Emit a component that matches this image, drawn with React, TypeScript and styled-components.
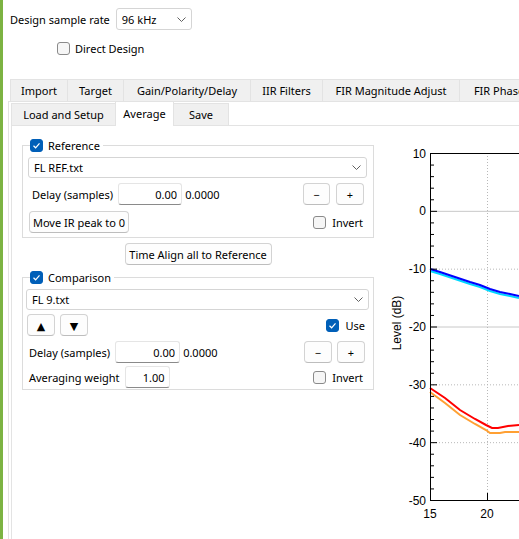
import React from 'react';
import styled, { createGlobalStyle } from 'styled-components';

const GlobalStyle = createGlobalStyle`
  html, body { margin: 0; padding: 0; background: #fff; }
  body {
    font-family: "Noto Sans", "Open Sans", sans-serif;
    font-size: 11px;
    color: #000;
  }
  * { box-sizing: border-box; }
`;

const Frame = styled.div`
  display: flex;
  width: 519px;
  height: 539px;
  overflow: hidden;
  background: #fff;
`;

const Accent = styled.div`
  width: 3px;
  flex: none;
  background: #7cb342;
`;

const Main = styled.div`
  flex: 1;
  min-width: 0;
  display: flex;
  flex-direction: column;
  padding-left: 5px;
`;

const TopRow = styled.div`
  display: flex;
  align-items: center;
  gap: 6px;
  height: 22px;
  margin-top: 8px;
  padding-left: 2px;
`;

const Combo = styled.div<{ $w?: number }>`
  display: flex;
  align-items: center;
  justify-content: space-between;
  width: ${p => (p.$w ? `${p.$w}px` : 'auto')};
  height: ${p => (p.$w ? '22px' : '21px')};
  padding: 0 5px 0 5px;
  background: #fff;
  border: 1px solid #d5d5d5;
  border-radius: 3px;
`;

const CheckRow = styled.label`
  display: flex;
  align-items: center;
  gap: 5px;
  height: 14px;
  margin-top: 11px;
  padding-left: 49px;
`;

const Box = styled.span<{ $on: boolean }>`
  display: inline-flex;
  align-items: center;
  justify-content: center;
  width: 13px;
  height: 13px;
  flex: none;
  border-radius: 3px;
  background: ${p => (p.$on ? '#005fb8' : '#f6f6f6')};
  border: 1px solid ${p => (p.$on ? '#005fb8' : '#8a8a8a')};
`;

const TabBar = styled.div<{ $inner?: boolean }>`
  display: flex;
  height: 22px;
  padding-left: ${p => (p.$inner ? '0' : '2px')};
  margin-top: ${p => (p.$inner ? '1px' : '24px')};
  flex: none;
`;

const Tab = styled.div<{ $w: number; $active?: boolean }>`
  width: ${p => p.$w}px;
  flex: none;
  display: flex;
  align-items: center;
  justify-content: center;
  white-space: nowrap;
  margin-right: -1px;
  margin-top: ${p => (p.$active ? '-2px' : '0')};
  height: ${p => (p.$active ? '25px' : '22px')};
  padding-bottom: ${p => (p.$active ? '2px' : '0')};
  background: ${p => (p.$active ? '#fff' : '#f0f0f0')};
  border: 1px solid #e3e3e3;
  border-bottom: none;
  position: relative;
  z-index: ${p => (p.$active ? 1 : 0)};
`;

const OuterPanel = styled.div`
  flex: 1;
  display: flex;
  flex-direction: column;
  border-top: 1px solid #e3e3e3;
  border-left: 1px solid #e3e3e3;
  min-height: 0;
`;

const InnerWrap = styled.div`
  flex: 1;
  display: flex;
  flex-direction: column;
  margin-left: 2px;
  min-height: 0;
`;

const InnerPanel = styled.div`
  flex: 1;
  display: flex;
  border-top: 1px solid #e3e3e3;
  border-left: 1px solid #e3e3e3;
  min-height: 0;
`;

const LeftCol = styled.div`
  width: 352px;
  flex: none;
  display: flex;
  flex-direction: column;
  margin: 12px 0 0 10px;
`;

const Group = styled.div<{ $pad: string; $mt: number }>`
  position: relative;
  display: flex;
  flex-direction: column;
  border: 1px solid #dcdcdc;
  padding: ${p => p.$pad};
  margin-top: ${p => p.$mt}px;
`;

const Legend = styled.label`
  position: absolute;
  top: -8px;
  left: 7px;
  display: flex;
  align-items: center;
  gap: 5px;
  height: 14px;
  padding-right: 3px;
  background: #fff;
`;

const Row = styled.div<{ $mt: number; $pl?: number; $center?: boolean }>`
  display: flex;
  align-items: center;
  justify-content: ${p => (p.$center ? 'center' : 'flex-start')};
  height: 22px;
  margin-top: ${p => p.$mt}px;
  padding-left: ${p => p.$pl ?? 0}px;
`;

const Label = styled.span`
  white-space: nowrap;
  margin-right: 5px;
`;

const Num = styled.input<{ $w: number }>`
  width: ${p => p.$w}px;
  height: 22px;
  font: inherit;
  text-align: right;
  padding: 0 4px 0 0;
  border: 1px solid #e5e5e5;
  border-bottom: 1px solid #8a8a8a;
  border-radius: 3px;
  background: #fff;
  color: #000;
  outline: none;
`;

const Readout = styled.span`
  margin-left: 3px;
`;

const Spacer = styled.div`
  flex: 1;
`;

const Button = styled.button<{ $w: number }>`
  width: ${p => p.$w}px;
  height: 22px;
  flex: none;
  font: inherit;
  color: #000;
  padding: 0;
  white-space: nowrap;
  background: #fdfdfd;
  border: 1px solid #d3d3d3;
  border-bottom-color: #bdbdbd;
  border-radius: 4px;
`;

const Gap = styled.span<{ $w: number }>`
  width: ${p => p.$w}px;
  flex: none;
`;

const Check = styled.label<{ $mr: number }>`
  display: flex;
  align-items: center;
  gap: 6px;
  margin-right: ${p => p.$mr}px;
`;

const Arrow = styled.span`
  font-family: "DejaVu Sans", sans-serif;
  font-size: 11px;
`;

const ChartBox = styled.div`
  flex: 1;
  min-width: 0;
  overflow: hidden;
  margin-left: 6px;
`;

const Chevron = () => (
  <svg width="9" height="5" viewBox="0 0 9 5">
    <polyline points="0.5,0.5 4.5,4.5 8.5,0.5" fill="none" stroke="#606060" strokeWidth="1" />
  </svg>
);

const CheckBox = ({ on }: { on: boolean }) => (
  <Box $on={on}>
    {on && (
      <svg width="9" height="9" viewBox="0 0 9 9">
        <polyline points="1.5,4.8 3.6,6.8 7.5,2.3" fill="none" stroke="#fff" strokeWidth="1.2" />
      </svg>
    )}
  </Box>
);

// chart geometry: svg origin is page (380, 126)
const AX = 50;
const TOP = 27;
const BOT = 374;
const yOf = (db: number) => TOP + ((10 - db) * (BOT - TOP)) / 60;

const toPts = (pts: number[][]) => pts.map(([x, y]) => `${x - 380},${y - 126}`).join(' ');

const blue = [[430, 269], [440, 272], [455, 277], [470, 282], [480, 285], [490, 289], [500, 292], [510, 294], [519, 296]];
const cyan = blue.map(([x, y]) => [x, y + 2]);
const red = [[430, 388], [445, 398], [460, 410], [475, 419], [486, 425], [492, 428], [498, 428], [508, 426], [519, 425]];
const orange = [[430, 392], [445, 403], [460, 415], [475, 424], [486, 430], [490, 433], [500, 433], [505, 432], [519, 432]];

function Chart() {
  const majors = [10, 0, -10, -20, -30, -40, -50];
  const minors: number[] = [];
  for (let d = 10; d > -50; d -= 2) if (d % 10 !== 0) minors.push(d);
  return (
    <svg width="200" height="413" style={{ display: 'block' }}>
      {[0, -20].map(d => (
        <line key={d} x1={AX} x2={200} y1={yOf(d) + 0.5} y2={yOf(d) + 0.5} stroke="#c8c8c8" />
      ))}
      {[-10, -30, -40].map(d => (
        <line key={d} x1={AX} x2={200} y1={yOf(d) + 0.5} y2={yOf(d) + 0.5} stroke="#b8b8b8" strokeDasharray="1 2" />
      ))}
      <line x1={107.5} x2={107.5} y1={TOP} y2={BOT} stroke="#b8b8b8" strokeDasharray="1 2" />
      <polyline points={toPts(cyan)} fill="none" stroke="#00d8ff" strokeWidth="2" />
      <polyline points={toPts(blue)} fill="none" stroke="#0000ff" strokeWidth="2" />
      <polyline points={toPts(orange)} fill="none" stroke="#ffa033" strokeWidth="2" />
      <polyline points={toPts(red)} fill="none" stroke="#ff0000" strokeWidth="2" />
      <line x1={AX + 0.5} x2={AX + 0.5} y1={TOP} y2={BOT + 1} stroke="#000" />
      <line x1={AX} x2={200} y1={TOP + 0.5} y2={TOP + 0.5} stroke="#000" />
      <line x1={AX} x2={200} y1={BOT + 0.5} y2={BOT + 0.5} stroke="#000" />
      {majors.map(d => (
        <line key={d} x1={AX} x2={AX + 7} y1={yOf(d) + 0.5} y2={yOf(d) + 0.5} stroke="#000" />
      ))}
      {minors.map(d => (
        <line key={d} x1={AX} x2={AX + 4} y1={yOf(d) + 0.5} y2={yOf(d) + 0.5} stroke="#000" />
      ))}
      <line x1={107.5} x2={107.5} y1={BOT - 7} y2={BOT} stroke="#000" />
      <g fontFamily="'Liberation Sans', Arial, sans-serif" fontSize="12" fill="#000">
        {majors.map(d => (
          <text key={d} x={AX - 4} y={yOf(d) + 4.5} textAnchor="end">
            {d}
          </text>
        ))}
        <text x={AX} y={392} textAnchor="middle">15</text>
        <text x={107} y={392} textAnchor="middle">20</text>
        <text x={0} y={0} textAnchor="middle" transform="translate(21 197) rotate(-90)">
          Level (dB)
        </text>
      </g>
    </svg>
  );
}

export default function App() {
  return (
    <>
      <GlobalStyle />
      <Frame>
        <Accent />
        <Main>
          <TopRow>
            <span>Design sample rate</span>
            <Combo $w={76}>
              <span>96 kHz</span>
              <Chevron />
            </Combo>
          </TopRow>
          <CheckRow>
            <CheckBox on={false} />
            <span>Direct Design</span>
          </CheckRow>
          <TabBar>
            <Tab $w={58}>Import</Tab>
            <Tab $w={57}>Target</Tab>
            <Tab $w={128}>Gain/Polarity/Delay</Tab>
            <Tab $w={73}>IIR Filters</Tab>
            <Tab $w={138}>FIR Magnitude Adjust</Tab>
            <Tab $w={80}>FIR Phase</Tab>
          </TabBar>
          <OuterPanel>
            <InnerWrap>
              <TabBar $inner>
                <Tab $w={105}>Load and Setup</Tab>
                <Tab $w={59} $active>Average</Tab>
                <Tab $w={56}>Save</Tab>
              </TabBar>
              <InnerPanel>
                <LeftCol>
                  <Group $pad="11px 6px 4px 5px" $mt={7}>
                    <Legend>
                      <CheckBox on />
                      <span>Reference</span>
                    </Legend>
                    <Combo>
                      <span>FL REF.txt</span>
                      <Chevron />
                    </Combo>
                    <Row $mt={5} $pl={4}>
                      <Label>Delay (samples)</Label>
                      <Num $w={64} defaultValue="0.00" />
                      <Readout>0.0000</Readout>
                      <Spacer />
                      <Button $w={27}>−</Button>
                      <Gap $w={6} />
                      <Button $w={28}>+</Button>
                      <Gap $w={3} />
                    </Row>
                    <Row $mt={6} $pl={1}>
                      <Button $w={100}>Move IR peak to 0</Button>
                      <Spacer />
                      <Check $mr={4}>
                        <CheckBox on={false} />
                        <span>Invert</span>
                      </Check>
                    </Row>
                  </Group>
                  <Row $mt={5} $center>
                    <Button $w={147}>Time Align all to Reference</Button>
                  </Row>
                  <Group $pad="11px 4px 1px 3px" $mt={12}>
                    <Legend>
                      <CheckBox on />
                      <span>Comparison</span>
                    </Legend>
                    <Combo>
                      <span>FL 9.txt</span>
                      <Chevron />
                    </Combo>
                    <Row $mt={4} $pl={1}>
                      <Button $w={28}>
                        <Arrow>▲</Arrow>
                      </Button>
                      <Gap $w={5} />
                      <Button $w={28}>
                        <Arrow>▼</Arrow>
                      </Button>
                      <Spacer />
                      <Check $mr={4}>
                        <CheckBox on />
                        <span>Use</span>
                      </Check>
                    </Row>
                    <Row $mt={5} $pl={3}>
                      <Label>Delay (samples)</Label>
                      <Num $w={65} defaultValue="0.00" />
                      <Readout>0.0000</Readout>
                      <Spacer />
                      <Button $w={28}>−</Button>
                      <Gap $w={5} />
                      <Button $w={28}>+</Button>
                      <Gap $w={4} />
                    </Row>
                    <Row $mt={3} $pl={3}>
                      <Label>Averaging weight</Label>
                      <Num $w={45} defaultValue="1.00" />
                      <Spacer />
                      <Check $mr={6}>
                        <CheckBox on={false} />
                        <span>Invert</span>
                      </Check>
                    </Row>
                  </Group>
                </LeftCol>
                <ChartBox>
                  <Chart />
                </ChartBox>
              </InnerPanel>
            </InnerWrap>
          </OuterPanel>
        </Main>
      </Frame>
    </>
  );
}
